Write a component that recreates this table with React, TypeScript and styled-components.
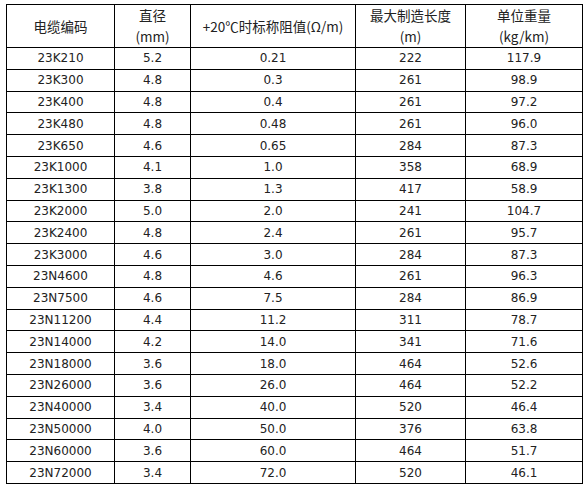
import React from "react";
import styled, { createGlobalStyle } from "styled-components";

type Cable = {
  code: string;
  diameter: string;
  resistance: string;
  length: string;
  weight: string;
};

const cables: Cable[] = [
  { code: "23K210", diameter: "5.2", resistance: "0.21", length: "222", weight: "117.9" },
  { code: "23K300", diameter: "4.8", resistance: "0.3", length: "261", weight: "98.9" },
  { code: "23K400", diameter: "4.8", resistance: "0.4", length: "261", weight: "97.2" },
  { code: "23K480", diameter: "4.8", resistance: "0.48", length: "261", weight: "96.0" },
  { code: "23K650", diameter: "4.6", resistance: "0.65", length: "284", weight: "87.3" },
  { code: "23K1000", diameter: "4.1", resistance: "1.0", length: "358", weight: "68.9" },
  { code: "23K1300", diameter: "3.8", resistance: "1.3", length: "417", weight: "58.9" },
  { code: "23K2000", diameter: "5.0", resistance: "2.0", length: "241", weight: "104.7" },
  { code: "23K2400", diameter: "4.8", resistance: "2.4", length: "261", weight: "95.7" },
  { code: "23K3000", diameter: "4.6", resistance: "3.0", length: "284", weight: "87.3" },
  { code: "23N4600", diameter: "4.8", resistance: "4.6", length: "261", weight: "96.3" },
  { code: "23N7500", diameter: "4.6", resistance: "7.5", length: "284", weight: "86.9" },
  { code: "23N11200", diameter: "4.4", resistance: "11.2", length: "311", weight: "78.7" },
  { code: "23N14000", diameter: "4.2", resistance: "14.0", length: "341", weight: "71.6" },
  { code: "23N18000", diameter: "3.6", resistance: "18.0", length: "464", weight: "52.6" },
  { code: "23N26000", diameter: "3.6", resistance: "26.0", length: "464", weight: "52.2" },
  { code: "23N40000", diameter: "3.4", resistance: "40.0", length: "520", weight: "46.4" },
  { code: "23N50000", diameter: "4.0", resistance: "50.0", length: "376", weight: "63.8" },
  { code: "23N60000", diameter: "3.6", resistance: "60.0", length: "464", weight: "51.7" },
  { code: "23N72000", diameter: "3.4", resistance: "72.0", length: "520", weight: "46.1" },
];

const GlobalStyle = createGlobalStyle`
  body {
    margin: 0;
    background: #ffffff;
  }
`;

const Page = styled.div`
  padding: 4px 6px;
`;

const Table = styled.table`
  border-collapse: collapse;
  table-layout: fixed;
  width: 577px;
  color: #222222;
`;

const HeadRow = styled.tr`
  height: 42px;
`;

const BodyRow = styled.tr`
  height: 21.8px;
`;

const HeadCell = styled.th<{ $w: number }>`
  width: ${(p) => p.$w}px;
  border: 1px solid #000000;
  padding: 0;
  font-family: "Noto Sans CJK SC", "Liberation Sans", sans-serif;
  font-size: 13.5px;
  font-weight: normal;
  line-height: 21px;
  text-align: center;
  vertical-align: middle;
`;

const Cell = styled.td`
  border: 1px solid #000000;
  padding: 0;
  font-family: "DejaVu Sans", Verdana, sans-serif;
  font-size: 12px;
  line-height: 14px;
  text-align: center;
  vertical-align: middle;
`;

function App() {
  return (
    <Page>
      <GlobalStyle />
      <Table>
        <thead>
          <HeadRow>
            <HeadCell $w={107}>电缆编码</HeadCell>
            <HeadCell $w={75}>
              直径
              <br />
              (mm)
            </HeadCell>
            <HeadCell $w={164}>+20℃时标称阻值(Ω/m)</HeadCell>
            <HeadCell $w={109}>
              最大制造长度
              <br />
              (m)
            </HeadCell>
            <HeadCell $w={116}>
              单位重量
              <br />
              (kg/km)
            </HeadCell>
          </HeadRow>
        </thead>
        <tbody>
          {cables.map((c) => (
            <BodyRow key={c.code}>
              <Cell>{c.code}</Cell>
              <Cell>{c.diameter}</Cell>
              <Cell>{c.resistance}</Cell>
              <Cell>{c.length}</Cell>
              <Cell>{c.weight}</Cell>
            </BodyRow>
          ))}
        </tbody>
      </Table>
    </Page>
  );
}

export default App;
